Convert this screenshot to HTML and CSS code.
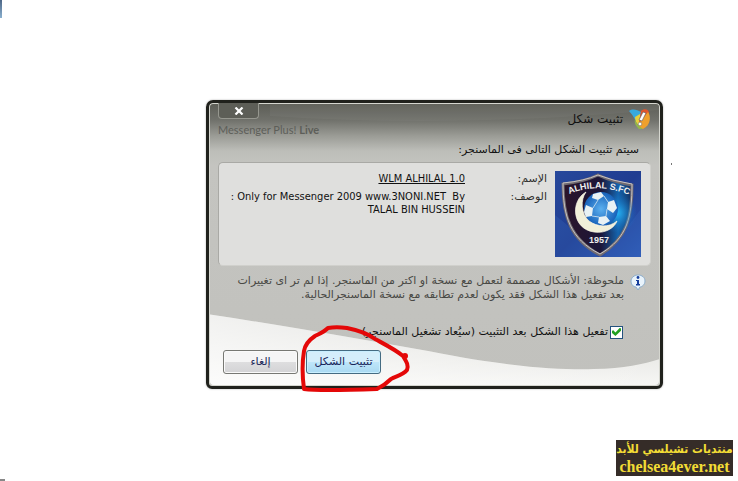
FILE: index.html
```
<!DOCTYPE html>
<html lang="ar">
<head>
<meta charset="utf-8">
<title>تثبيت شكل</title>
<link rel="stylesheet" href="styles.css">
</head>
<body>
<span class="speck speck-top"></span>
<span class="speck speck-bottom"></span>
<span class="speck speck-side"></span>
<main class="page">
  <form class="dialog" dir="rtl">
    <svg class="wave" viewBox="0 0 450 283" preserveAspectRatio="none" aria-hidden="true">
      <defs>
        <linearGradient id="foot" x1="0" y1="0" x2="0" y2="1">
          <stop offset="0" stop-color="#d8d8d4"/><stop offset="1" stop-color="#f6f6f4"/>
        </linearGradient>
        <linearGradient id="footLeft" x1="0" y1="0" x2="1" y2="0">
          <stop offset="0" stop-color="#fff" stop-opacity=".65"/><stop offset="1" stop-color="#fff" stop-opacity="0"/>
        </linearGradient>
      </defs>
      <path d="M0 212C80 224 150 237 220 249C300 265 350 268 385 267C415 266 435 262 450 257V283H0Z" fill="url(#foot)"/>
      <path d="M0 212C80 224 150 237 220 249C300 265 350 268 385 267C415 266 435 262 450 257V283H0Z" fill="url(#footLeft)"/>
      <path d="M60 12C180 20 300 19 450 6V0H60Z" fill="#fff" opacity=".04"/>
    </svg>
    <header class="titlebar">
      <div class="heading">
        <svg class="app-icon" viewBox="0 0 22 22" aria-hidden="true">
          <path d="M0 3C4 0 8 2 12 4L11 16C6 14 5 8 0 3Z" fill="#38a9de"/>
          <path d="M6 9L11 6L12 19C8 17 6 13 6 9Z" fill="#e7cf3c"/>
          <path d="M12 3C15 0 20 1 20 5L16 13L10 14Z" fill="#e2552b"/>
          <path d="M19 4C22 8 22 17 14 21L9 20L12 13Z" fill="#efa02c"/>
          <path d="M6 11C7 16 10 18 14 21L10 21C7 18 5 15 6 11Z" fill="#91b94a"/>
          <path d="M14 4L17 5L13 13L10 12Z" fill="#fff" stroke="#555" stroke-width=".6"/>
          <circle cx="11" cy="16" r="1.8" fill="#fff" stroke="#666" stroke-width=".5"/>
        </svg>
        <h1 class="title">تثبيت شكل</h1>
      </div>
      <div class="brand-block" dir="ltr">
        <button class="close" type="button" aria-label="إغلاق">
          <svg viewBox="0 0 10 8" aria-hidden="true"><path d="M1.5 0.5L8.5 7.5M8.5 0.5L1.5 7.5" stroke="#fff" stroke-width="2.2"/></svg>
        </button>
        <span class="brand">Messenger Plus! <b>Live</b></span>
      </div>
    </header>
    <p class="lead">سيتم تثبيت الشكل التالى فى الماسنجر:</p>
    <section class="panel">
      <svg class="crest" viewBox="0 0 86 86" role="img" aria-label="ALHILAL S.FC">
        <defs>
          <linearGradient id="sky" x1="0" y1="0" x2="1" y2="1">
            <stop offset="0" stop-color="#27489b"/><stop offset=".5" stop-color="#203d91"/><stop offset="1" stop-color="#2d58b5"/>
          </linearGradient>
          <linearGradient id="shield" x1="0" y1="0" x2="1" y2="0">
            <stop offset="0" stop-color="#2b1429"/><stop offset=".55" stop-color="#1c1639"/><stop offset=".8" stop-color="#1464ae"/><stop offset="1" stop-color="#14305f"/>
          </linearGradient>
          <radialGradient id="glow"><stop offset="0" stop-color="#27b5f5"/><stop offset="1" stop-color="#1974c9" stop-opacity="0"/></radialGradient>
          <radialGradient id="ball"><stop offset="0" stop-color="#5bb0ef"/><stop offset="1" stop-color="#1761b9"/></radialGradient>
          <path id="arc" d="M12 24Q43 10 76 25"/>
        </defs>
        <rect width="86" height="86" fill="url(#sky)"/>
        <path d="M0 44Q22 61 43 86H0ZM86 38Q70 60 48 86H86Z" fill="#3d70c5" opacity=".25"/>
        <path d="M8 13Q29 11 43 4Q58 11 77 14C77 45 73 67 45 84C15 68 8 45 8 13Z" fill="url(#shield)" stroke="#706a70" stroke-width="3"/>
        <path d="M8 12Q29 10 43 4Q58 10 77 13C77 45 73 67 45 83C15 68 8 45 8 12Z" fill="none" stroke="#c7c3c4" stroke-width="1"/>
        <circle cx="62" cy="42" r="20" fill="url(#glow)"/>
        <circle cx="46" cy="38" r="17" fill="url(#ball)"/>
        <g fill="#e8f1f4">
          <path d="M38 23L46 21L49 25L43 29L37 27Z"/>
          <path d="M31 34L38 37L37 45L31 46L29 41Z"/>
          <path d="M53 31L59 29L62 37L58 42L52 38Z"/>
          <path d="M44 46L51 45L55 50L48 54L43 52Z"/>
        </g>
        <path d="M43 29L38 37M49 25L53 31M37 45L44 46M52 38L51 45" stroke="#b9d5eb" stroke-width="1"/>
        <path d="M31 21C15 30 17 58 39 61C51 63 60 56 62 50C54 57 42 56 34 50C26 43 25 29 31 21Z" fill="#f1efd9" stroke="#fffbe9" stroke-width=".7"/>
        <text class="crest-name"><textPath href="#arc" startOffset="50%" text-anchor="middle">ALHILAL S.FC</textPath></text>
        <text class="crest-year" x="44" y="72" text-anchor="middle">1957</text>
      </svg>
      <dl class="details">
        <dt>الإسم:</dt><dd dir="rtl"><a class="skin" href="#" dir="ltr">WLM ALHILAL 1.0</a></dd>
        <dt>الوصف:</dt><dd dir="ltr">: Only for Messenger 2009 www.3NONI.NET&nbsp; By<br>TALAL BIN HUSSEIN</dd>
      </dl>
    </section>
    <div class="note">
      <svg class="info" viewBox="0 0 16 17" aria-hidden="true">
        <path d="M8 1C12 1 15 3.500 15 7S12 13 10 13L8 16L6 13C3 13 1 10 1 7S4 1 8 1Z" fill="#e9f3fb" stroke="#8badcc"/>
        <circle cx="8" cy="3.500" r="1.400" fill="#173e9c"/>
        <path d="M6 6H9V10H10V11.500H6V10H7V7H6Z" fill="#173e9c"/>
      </svg>
      <p>ملحوظة: الأشكال مصممة لتعمل مع نسخة او اكتر من الماسنجر. إذا لم تر اى تغييرات<br>بعد تفعيل هذا الشكل فقد يكون لعدم تطابقه مع نسخة الماسنجرالحالية.</p>
    </div>
    <label class="option"><input type="checkbox" checked><span>تفعيل هذا الشكل بعد التثبيت (سيُعاد تشغيل الماسنجر)</span></label>
    <div class="actions">
      <button class="btn primary" type="submit">تثبيت الشكل</button>
      <button class="btn" type="button">إلغاء</button>
    </div>
    <svg class="scribble" viewBox="0 0 116 72" aria-hidden="true">
      <path d="M76 16C68 10 58 7 48 5C40 4 35 4 29 5C25 9 20 11 16 13C10 17 6 22 5 28C3 40 3 51 5 66C20 68 49 67 78 66C84 63 88 60 92 56C98 53 104 52 108 47C110 42 107 38 104 33C97 27 87 22 76 16" fill="none" stroke="#e40808" stroke-width="4" stroke-linecap="round" stroke-linejoin="round"/>
      <circle cx="106" cy="33" r="3" fill="#e40808"/>
    </svg>
  </form>
</main>
<footer class="watermark">
  <span dir="rtl">منتديات تشيلسي للأبد</span>
  <span dir="ltr">chelsea4ever.net</span>
</footer>
</body>
</html>
```
FILE: styles.css
```
* { box-sizing: border-box; }
body {
  margin: 0;
  min-height: 100vh;
  display: flex;
  flex-direction: column;
  justify-content: space-between;
  background: #fff;
  color: #111;
  font: 11px/14px "DejaVu Sans", sans-serif;
}
h1, p, dl, dd { margin: 0; }
.page { padding: 100px 75px 0 206px; }
.dialog {
  position: relative;
  padding: 0 9px 12px 9px;
  border: 3px solid #20211c;
  border-radius: 7px 7px 6px 6px;
  background: linear-gradient(#5b5c55 0, #70716b 17px, #9b9c96 33px, #bdbeb9 48px, #c4c4c0 62px, #c1c1bd 100%);
  box-shadow: inset 0 0 0 1px #d5d6cf, 0 0 2px #aaa;
}
.dialog > * { position: relative; }
.dialog > .wave {
  position: absolute;
  inset: 1px;
  width: calc(100% - 2px);
  height: calc(100% - 2px);
  border-radius: 4px;
}
.titlebar { display: flex; justify-content: space-between; height: 39px; }
.heading { display: flex; gap: 6px; padding: 5px 0 0; }
.app-icon { width: 22px; height: 22px; }
.title { padding-top: 2px; font-size: 12px; line-height: 18px; font-weight: 400; }
.brand-block { display: flex; flex-direction: column; align-items: flex-start; gap: 4px; }
.close {
  width: 41px;
  height: 16px;
  padding: 0;
  border: 1px solid #96978f;
  border-top: 0;
  border-radius: 0 0 4px 4px;
  background: #5d5e57;
  display: grid;
  place-items: center;
}
.close svg { width: 10px; height: 8px; }
.brand { color: #5d5e59; font: 11px/14px Lato, sans-serif; }
.lead { padding: 0 12px 0 0; line-height: 16px; margin-bottom: 4px; }
.panel {
  display: flex;
  gap: 8px;
  min-height: 103px;
  padding: 8px 9px;
  border: 1px solid #aaa;
  border-color: #a9a9a5 #d0d0cc #d0d0cc #a9a9a5;
  border-radius: 5px;
  background: #dfdfdd;
}
.crest { width: 86px; height: 86px; flex: none; }
.crest-name, .crest-year { fill: #eee; font: bold 9px "Liberation Sans", sans-serif; }
.details {
  flex: 1;
  display: grid;
  grid-template-columns: 82px 1fr;
  grid-template-rows: 18px auto;
  line-height: 13px;
  padding-top: 1px;
}
.details dt { color: #30302e; font-weight: 400; }
.details dd { text-align: right; font-family: "DejaVu Sans Condensed", "DejaVu Sans", sans-serif; }
.skin { color: #111; }
.note { display: flex; gap: 6px; padding: 8px 5px 0 0; color: #484844; }
.info { width: 16px; height: 17px; flex: none; }
.note p { white-space: nowrap; }
.option { display: flex; align-items: center; gap: 2px; margin: 22px 28px 0 0; height: 16px; }
.option input {
  appearance: none;
  width: 13px;
  height: 13px;
  margin: 0;
  border: 1px solid #24527e;
  background: #fff;
  display: grid;
  place-items: center;
}
.option input:checked::before {
  content: "";
  width: 9px;
  height: 9px;
  background: #21a121;
  clip-path: polygon(0 35%, 15% 30%, 38% 55%, 90% 0, 100% 15%, 100% 35%, 38% 95%, 0 60%);
}
.actions { display: flex; justify-content: flex-end; gap: 8px; padding: 10px 0 0 5px; }
.btn {
  width: 75px;
  height: 24px;
  padding: 0;
  border: 1px solid #777873;
  border-radius: 3px;
  background: linear-gradient(#f5f5f5 0 50%, #dededf 50%, #d3d3d5);
  box-shadow: inset 0 0 0 1px #fafafa;
  color: #182458;
  font: inherit;
}
.primary {
  border-color: #446b82;
  background: linear-gradient(#d4eefb 0 50%, #bfe6fa 50%, #a9d9f2);
  box-shadow: inset 0 0 0 1px #c9efff;
}
.dialog > .scribble {
  position: absolute;
  left: 90px;
  bottom: -9px;
  width: 116px;
  height: 72px;
  pointer-events: none;
}
.watermark {
  align-self: flex-end;
  display: flex;
  flex-direction: column;
  align-items: center;
  width: 117px;
  height: 36px;
  margin: 0 5px 5px 0;
  background: #352c28;
  color: #f2dc35;
  font: bold 16px/18px "Liberation Serif", serif;
  white-space: nowrap;
}
.watermark span:first-child { font: bold 12px/18px "DejaVu Sans Condensed", "DejaVu Sans", sans-serif; }
.speck { position: absolute; }
.speck-top { left: 0; top: 0; width: 2px; height: 18px; background: linear-gradient(#4d6686, #8ab0cf); }
.speck-bottom { left: 0; top: 479px; width: 5px; height: 2px; background: #888; }
.speck-side { left: 671px; top: 163px; width: 1px; height: 2px; background: #777; }
```
